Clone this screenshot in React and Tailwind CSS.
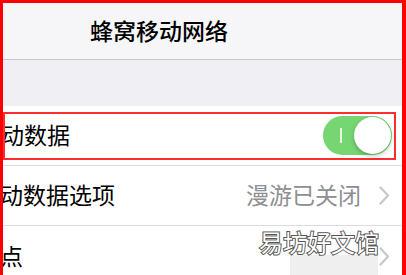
const Chevron = () => (
  <svg width="11" height="19" viewBox="0 0 11 19" className="shrink-0">
    <path d="M1.5 1.5 L9 9.5 L1.5 17.5" fill="none" stroke="#c7c7cc" strokeWidth="2.2" strokeLinecap="round" strokeLinejoin="round" />
  </svg>
);

const App = () => {
  return (
    <div
      className="relative w-[406px] h-[275px] overflow-hidden bg-white border-l-[3px] border-t-[3px] border-r-[4px] border-[#ff0000] text-black"
      style={{ fontFamily: '"Noto Sans", "Noto Sans CJK SC", sans-serif' }}
    >
      {/* nav bar */}
      <div className="h-[57px] bg-[#f6f6f8] border-b border-[#c8c7cc] flex items-center pl-[87px]">
        <span className="text-[23px] font-medium leading-none">蜂窝移动网络</span>
      </div>

      {/* group gap */}
      <div className="h-[46px] bg-[#efeff4]" />

      {/* rows */}
      <div className="bg-white">
        <div className="relative h-[60px] flex items-center justify-between pr-[12px] border-b border-[#dcdce0]">
          <div className="absolute left-0 top-[6px] w-[393px] h-[48px] border-2 border-[#ff2d2d]" />
          <span className="text-[23px] leading-none -ml-[2px]">动数据</span>
          <div className="relative w-[69px] h-[39px] rounded-full bg-[#76d672] mr-[-2px]">
            <div className="absolute left-[17px] top-[12px] w-[2px] h-[15px] bg-white/80" />
            <div className="absolute right-[1px] top-[1px] w-[37px] h-[37px] rounded-full bg-white shadow-[0_2px_4px_rgba(0,0,0,0.25)]" />
          </div>
        </div>

        <div className="h-[60px] flex items-center justify-between pr-[12px] border-b border-[#dcdce0]">
          <span className="text-[23px] leading-none -ml-[3px]">动数据选项</span>
          <div className="flex items-center gap-[18px]">
            <span className="text-[23px] leading-none text-[#8e8e93]">漫游已关闭</span>
            <Chevron />
          </div>
        </div>

        <div className="h-[60px] flex items-center justify-between pr-[12px]">
          <span className="text-[23px] leading-none -ml-[3px]">点</span>
          <Chevron />
        </div>
      </div>

      {/* watermark */}
      <div className="absolute left-[287px] top-[252px] w-[88px] h-[20px] bg-[#efefef]" />
      <div className="absolute left-[256px] top-[228px] text-[24px] leading-none text-white [-webkit-text-stroke:2px_#555] [paint-order:stroke_fill]">
        易坊好文馆
      </div>
    </div>
  );
};

export default App;
